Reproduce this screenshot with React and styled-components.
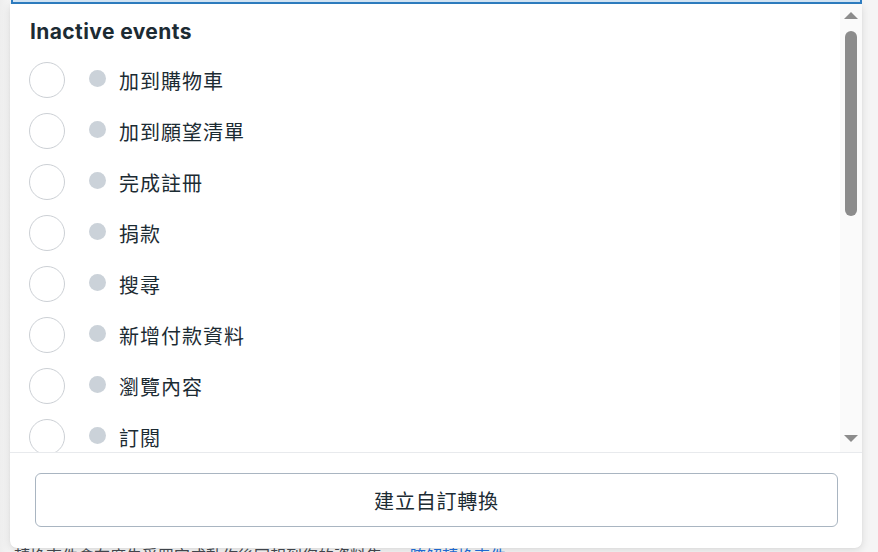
import React from "react";
import styled, { createGlobalStyle } from "styled-components";

const GlobalStyle = createGlobalStyle`
  html, body {
    margin: 0;
    padding: 0;
    background: #f0f2f5;
    overflow: hidden;
  }
  body {
    font-family: "Noto Sans CJK TC", "Noto Sans", sans-serif;
  }
`;

const Page = styled.div`
  width: 878px;
  height: 552px;
  overflow: hidden;
  background: linear-gradient(90deg, #eeeeee 0px, #f5f5f5 10px, #f5f5f5 100%);
  padding: 0 16px 0 10px;
  box-sizing: border-box;
`;

const Field = styled.div`
  height: 2px;
  border: 2px solid #2f7fc4;
  border-top: none;
  background: #d4e6f6;
  margin-left: 1px;
`;

const Dropdown = styled.div`
  position: relative;
  z-index: 2;
  height: 544px;
  background: #ffffff;
  border-radius: 0 0 7px 7px;
  box-shadow: 0 2px 8px rgba(0, 0, 0, 0.12), 0 0 1px rgba(0, 0, 0, 0.1);
  display: flex;
  flex-direction: column;
`;

const Body = styled.div`
  flex: 0 0 448px;
  display: flex;
  overflow: hidden;
`;

const List = styled.div`
  flex: 1;
  overflow: hidden;
  padding: 16px 0 0 19px;
`;

const Heading = styled.div`
  font-family: "Inter", "Noto Sans", sans-serif;
  font-weight: 700;
  font-size: 21px;
  letter-spacing: 0.4px;
  line-height: 24px;
  color: #1c2b33;
  padding-left: 1px;
  margin-bottom: 10px;
`;

const Row = styled.div`
  height: 51px;
  display: flex;
  align-items: center;
`;

const Radio = styled.span`
  width: 34px;
  height: 34px;
  border: 1px solid #ccd0d5;
  border-radius: 50%;
  flex: none;
`;

const Dot = styled.span`
  width: 17px;
  height: 17px;
  margin: 0 13px 2px 24px;
  border-radius: 50%;
  background: #cbd2d9;
  flex: none;
`;

const Label = styled.span`
  font-size: 20px;
  letter-spacing: 1px;
  color: #1c2b33;
  margin-top: 1px;
`;

const Scrollbar = styled.div`
  flex: 0 0 22px;
  background: #fafafa;
  display: flex;
  flex-direction: column;
  align-items: center;
  padding: 8px 0 10px;
  box-sizing: border-box;
`;

const Arrow = styled.span`
  width: 0;
  height: 0;
  border-left: 7.5px solid transparent;
  border-right: 7.5px solid transparent;
  ${(p) =>
    p.$down
      ? "border-top: 7px solid #8c8c8c;"
      : "border-bottom: 7px solid #8c8c8c;"}
`;

const Thumb = styled.span`
  width: 12px;
  height: 185px;
  margin-top: 12px;
  border-radius: 6px;
  background: #8c8c8c;
`;

const Spacer = styled.span`
  flex: 1;
`;

const Footer = styled.div`
  flex: 1;
  border-top: 1px solid #e8eaed;
  padding: 20px 24px 0 25px;
`;

const Button = styled.button`
  width: 100%;
  height: 54px;
  background: #ffffff;
  border: 1px solid #a9b5c1;
  border-radius: 6px;
  font-family: "Noto Sans CJK TC", "Noto Sans", sans-serif;
  font-size: 20px;
  letter-spacing: 0.8px;
  color: #1c2b33;
  cursor: pointer;
`;

const BehindText = styled.div`
  margin-top: -3px;
  padding-left: 4px;
  font-size: 16px;
  line-height: 20px;
  color: #444950;
  white-space: nowrap;
`;

const BehindLink = styled.span`
  color: #216fdb;
  margin-left: 12px;
`;

const events = [
  "加到購物車",
  "加到願望清單",
  "完成註冊",
  "捐款",
  "搜尋",
  "新增付款資料",
  "瀏覽內容",
  "訂閱",
  "開始試用",
];

export default function App() {
  return (
    <>
      <GlobalStyle />
      <Page>
        <Field />
        <Dropdown>
          <Body>
            <List>
              <Heading>Inactive events</Heading>
              {events.map((name) => (
                <Row key={name}>
                  <Radio />
                  <Dot />
                  <Label>{name}</Label>
                </Row>
              ))}
            </List>
            <Scrollbar>
              <Arrow />
              <Thumb />
              <Spacer />
              <Arrow $down />
            </Scrollbar>
          </Body>
          <Footer>
            <Button>建立自訂轉換</Button>
          </Footer>
        </Dropdown>
        <BehindText>
          轉換事件會在廣告受眾完成動作後回報到您的資料集。
          <BehindLink>瞭解轉換事件</BehindLink>
        </BehindText>
      </Page>
    </>
  );
}
